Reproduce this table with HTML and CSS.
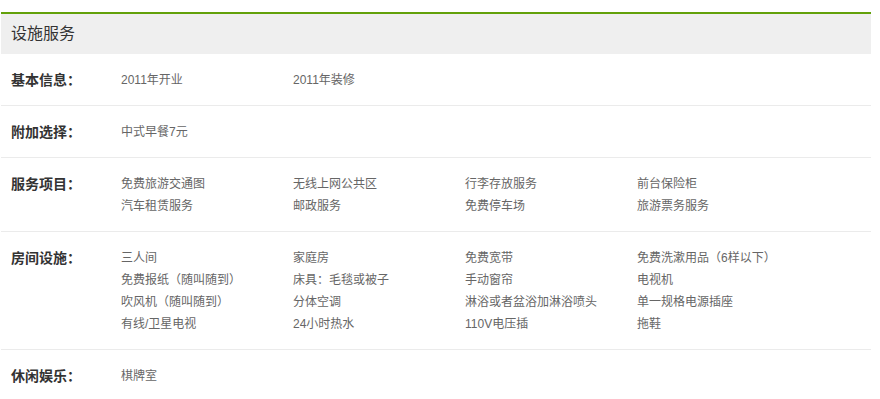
FILE: index.html
```html
<!DOCTYPE html>
<html lang="zh-CN">
<head>
<meta charset="utf-8">
<title>设施服务</title>
<link rel="stylesheet" href="styles.css">
</head>
<body>
<div class="page">
  <section class="facility">
    <h2 class="facility-title">设施服务</h2>
    <div class="row">
      <div class="label">基本信息：</div>
      <ul class="items">
        <li>2011年开业</li>
        <li>2011年装修</li>
      </ul>
    </div>
    <div class="row">
      <div class="label">附加选择：</div>
      <ul class="items">
        <li>中式早餐7元</li>
      </ul>
    </div>
    <div class="row">
      <div class="label">服务项目：</div>
      <ul class="items">
        <li>免费旅游交通图</li>
        <li>无线上网公共区</li>
        <li>行李存放服务</li>
        <li>前台保险柜</li>
        <li>汽车租赁服务</li>
        <li>邮政服务</li>
        <li>免费停车场</li>
        <li>旅游票务服务</li>
      </ul>
    </div>
    <div class="row">
      <div class="label">房间设施：</div>
      <ul class="items">
        <li>三人间</li>
        <li>家庭房</li>
        <li>免费宽带</li>
        <li>免费洗漱用品（6样以下）</li>
        <li>免费报纸（随叫随到）</li>
        <li>床具：毛毯或被子</li>
        <li>手动窗帘</li>
        <li>电视机</li>
        <li>吹风机（随叫随到）</li>
        <li>分体空调</li>
        <li>淋浴或者盆浴加淋浴喷头</li>
        <li>单一规格电源插座</li>
        <li>有线/卫星电视</li>
        <li>24小时热水</li>
        <li>110V电压插</li>
        <li>拖鞋</li>
      </ul>
    </div>
    <div class="row row-last">
      <div class="label">休闲娱乐：</div>
      <ul class="items">
        <li>棋牌室</li>
      </ul>
    </div>
  </section>
</div>
</body>
</html>
```
FILE: styles.css
```css
* { box-sizing: border-box; }
html, body { margin: 0; padding: 0; background: #fff; }
body {
  font-family: "Liberation Sans", Arial, "Noto Sans CJK SC", sans-serif;
  color: #666;
}
.page { padding: 12px 0 0 1px; }
.facility {
  width: 870px;
  border-top: 2px solid #63a10a;
}
.facility-title {
  margin: 0;
  height: 40px;
  line-height: 40px;
  padding-left: 10px;
  background: #efefef;
  font-size: 16px;
  font-weight: normal;
  color: #333;
}
.row {
  display: flex;
  padding: 15px 0 14px;
  border-bottom: 1px solid #ebebeb;
}
.row-last { border-bottom: none; }
.label {
  width: 120px;
  flex: none;
  padding-left: 10px;
  font-size: 14px;
  font-weight: bold;
  line-height: 22px;
  color: #333;
}
.items {
  list-style: none;
  margin: 0;
  padding: 0;
  display: grid;
  grid-template-columns: repeat(4, 172px);
  font-size: 12px;
  line-height: 22px;
  color: #666;
}
.items li { white-space: nowrap; }
```
